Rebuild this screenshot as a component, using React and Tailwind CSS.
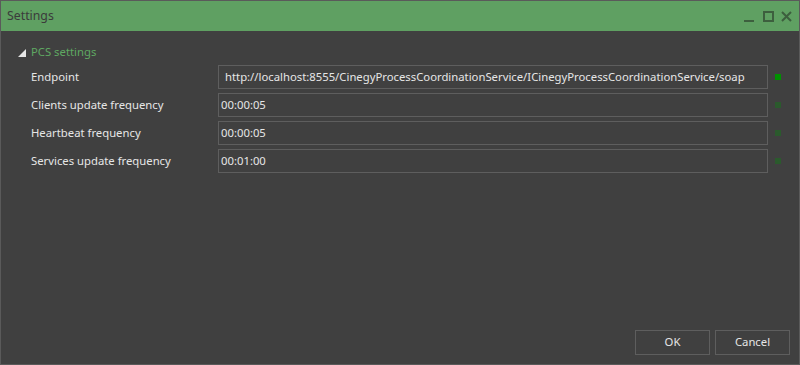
import React from 'react';

const rows = [
  { label: 'Endpoint', value: 'http://localhost:8555/CinegyProcessCoordinationService/ICinegyProcessCoordinationService/soap', pad: 'pl-[6px]', dot: 'bg-[#009000]' },
  { label: 'Clients update frequency', value: '00:00:05', pad: 'pl-[2px]', dot: 'bg-[#2b5a2d]' },
  { label: 'Heartbeat frequency', value: '00:00:05', pad: 'pl-[2px]', dot: 'bg-[#2b5a2d]' },
  { label: 'Services update frequency', value: '00:01:00', pad: 'pl-[2px]', dot: 'bg-[#2b5a2d]' },
];

const App = () => {
  return (
    <div className="w-[800px] h-[365px] flex flex-col border border-[#5a5a5a] bg-[#404040] text-[11.3px] text-[#e6e6e6]" style={{ fontFamily: '"Noto Sans", "Open Sans", sans-serif' }}>
      {/* Title bar */}
      <div className="h-[30px] shrink-0 bg-[#5fa062] flex items-center justify-between pl-[6px] pr-[7px]">
        <span className="text-[12.3px] text-[#3b3b3b]">Settings</span>
        <svg width="48" height="12" viewBox="0 0 48 12" className="mt-[1px]">
          <rect x="0" y="9" width="10" height="2" fill="#3d5f3e" />
          <rect x="20" y="1" width="9" height="9" fill="none" stroke="#3d5f3e" strokeWidth="2" />
          <path d="M38 1 L47 10 M47 1 L38 10" stroke="#3d5f3e" strokeWidth="2" />
        </svg>
      </div>

      {/* Body */}
      <div className="flex-1 flex flex-col">
        <div className="flex items-center pl-[17px] pt-[13px] h-[30px]">
          <svg width="8" height="8" viewBox="0 0 8 8">
            <polygon points="8,0 8,8 0,8" fill="#e6e6e6" />
          </svg>
          <span className="ml-[5px] text-[#5fa862]">PCS settings</span>
        </div>

        <div className="flex flex-col gap-[4px] mt-[4px]">
          {rows.map((r) => (
            <div key={r.label} className="flex items-center h-[24px]">
              <div className="w-[217px] pl-[30px] shrink-0">{r.label}</div>
              <div className={`w-[550px] h-[24px] border border-[#5e5e5e] flex items-center ${r.pad} whitespace-nowrap overflow-hidden`}>
                {r.value}
              </div>
              <div className={`ml-[7px] w-[6px] h-[6px] ${r.dot}`} />
            </div>
          ))}
        </div>

        <div className="mt-auto flex justify-end gap-[5px] pr-[9px] pb-[9px]">
          <button className="w-[75px] h-[25px] border border-[#5e5e5e] text-[#e6e6e6]">OK</button>
          <button className="w-[75px] h-[25px] border border-[#5e5e5e] text-[#e6e6e6]">Cancel</button>
        </div>
      </div>
    </div>
  );
};

export default App;
